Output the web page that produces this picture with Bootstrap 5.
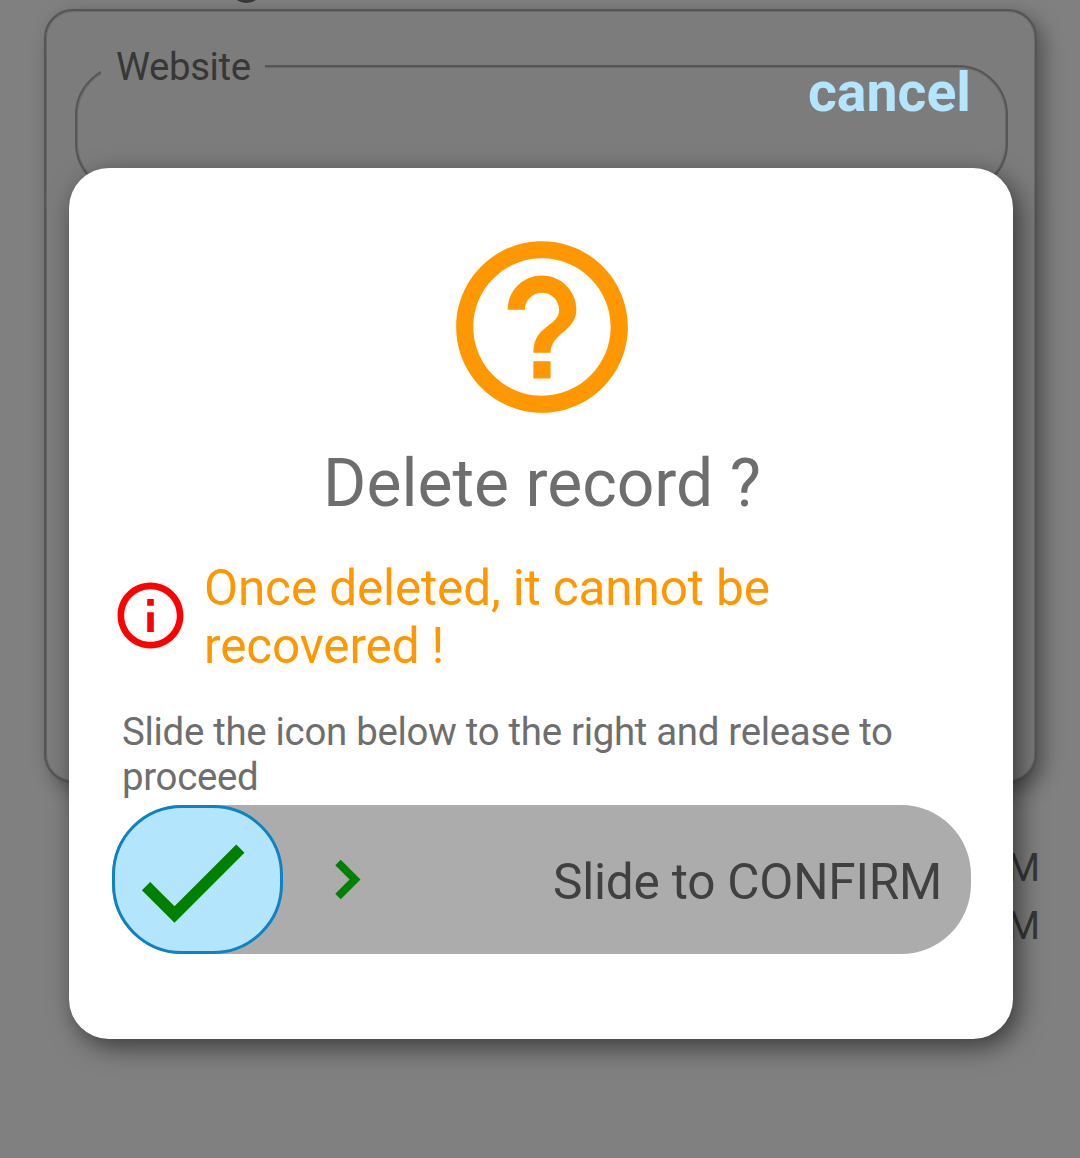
<!DOCTYPE html>
<html lang="en">
<head>
<meta charset="utf-8">
<meta name="viewport" content="width=device-width, initial-scale=1">
<title>Delete record</title>
<link href="https://cdn.jsdelivr.net/npm/bootstrap@5.3.0/dist/css/bootstrap.min.css" rel="stylesheet">
<style>
body{font-family:Roboto,"Noto Sans",sans-serif;background:#808080;color:#373737}
.screen{height:1158px;background:#808080}
.page-heading{height:9px;padding-left:232px;font-size:54px;line-height:54px}
.page-heading span{margin-top:-53px}
.record-card{height:774px;margin:0 43px 0 44px;padding:54px 27px 0 29px;border:2px solid #555;border-radius:29px;background:#7c7c7c;box-shadow:7px 7px 20px rgba(0,0,0,.36),inset 0 0 0 1px #696969}
.site-field{height:128px;border:2px solid #555;border-radius:50px;padding-left:24px;box-shadow:inset 0 0 0 1px #696969}
.site-label{height:40px;margin-top:-20px;padding:0 15px 0 15px;background:#7c7c7c;font-size:38.4px;line-height:40px;letter-spacing:-.4px;width:164px;white-space:nowrap}
.times{padding:56px 40px 0 0;font-size:38.4px;line-height:58px}
.overlay{padding:63px 67px 0 69px}
.cancel{height:105px;padding-right:42px;color:#b3e5fc;font-size:55.4px;line-height:60px;font-weight:700}
.dialog-panel{height:871px;border-radius:40px;box-shadow:6px 8px 26px rgba(0,0,0,.55);padding:56px 42px 0 43px}
.title-text{height:78px;margin-top:15px;padding-left:1px;font-size:66px;line-height:78px;color:#6e6e6e;white-space:nowrap}
.warn{margin-top:34.5px;height:116px;color:#ff9800;font-size:49.5px;letter-spacing:-.14px;line-height:58px;white-space:nowrap}
.warn svg{margin:0 14px 0 -1px}
.warn-text{padding-top:3px}
.hint{margin:35.5px 0 0 10px;height:90px;font-size:38.4px;letter-spacing:-.3px;line-height:45px;color:#6e6e6e;white-space:nowrap}
.slider{margin-top:5.5px;height:149px;border-radius:70px;background:#acacac;color:#404040;font-size:49.5px;letter-spacing:-.2px;padding-right:29px;white-space:nowrap}
.thumb{width:171px;height:149px;border:3px solid #0f82c4;border-radius:70px;background:#b3e5fc}
.check{margin-left:6.5px;margin-top:6px}
.arrow{margin-left:24px;margin-top:1px}
.slide-label{padding-top:6px}
</style>
<script src="https://cdn.jsdelivr.net/npm/bootstrap@5.3.0/dist/js/bootstrap.bundle.min.js"></script>
</head>
<body>
<div class="screen position-relative overflow-hidden">
  <div class="page-heading d-flex fw-bold"><span>g</span></div>
  <div class="record-card">
    <div class="site-field d-flex align-items-start"><div class="site-label">Website</div></div>
  </div>
  <div class="times text-end"><div>M</div><div>M</div></div>

  <div class="overlay position-absolute top-0 start-0 w-100">
    <div class="cancel text-end">cancel</div>
    <div class="dialog-panel bg-white" role="dialog">
      <div class="d-flex justify-content-center">
        <svg width="206" height="206" viewBox="0 0 24 24" fill="#ff9800"><path d="M11 18h2v-2h-2v2zm1-16C6.48 2 2 6.48 2 12s4.480 10 10 10 10-4.480 10-10S17.520 2 12 2zm0 18c-4.410 0-8-3.590-8-8s3.590-8 8-8 8 3.590 8 8-3.590 8-8 8zm0-14c-2.210 0-4 1.790-4 4h2c0-1.100.9-2 2-2s2 .9 2 2c0 2-3 1.750-3 5h2c0-2.250 3-2.500 3-5 0-2.210-1.790-4-4-4z"/></svg>
      </div>
      <div class="title-text text-center">Delete record ?</div>
      <div class="warn d-flex align-items-center">
        <svg class="flex-shrink-0" width="79" height="79" viewBox="0 0 24 24" fill="#f00"><path d="M11 7h2v2h-2zm0 4h2v6h-2zm1-9C6.480 2 2 6.480 2 12s4.480 10 10 10 10-4.480 10-10S17.520 2 12 2zm0 18c-4.410 0-8-3.590-8-8s3.590-8 8-8 8 3.590 8 8-3.590 8-8 8z"/></svg>
        <div class="warn-text">Once deleted, it cannot be<br>recovered !</div>
      </div>
      <div class="hint">Slide the icon below to the right and release to<br>proceed</div>
      <div class="slider d-flex align-items-center">
        <div class="thumb d-flex align-items-center">
          <svg class="check" width="140" height="140" viewBox="0 0 24 24" fill="green"><path d="M9 16.170L4.830 12l-1.420 1.410L9 19 21 7l-1.410-1.410z"/></svg>
        </div>
        <svg class="arrow" width="79" height="79" viewBox="0 0 24 24" fill="green"><path d="M10.250 6L8.590 7.660 12.930 12l-4.340 4.340L10.250 18l6-6z"/></svg>
        <div class="slide-label ms-auto">Slide to CONFIRM</div>
      </div>
    </div>
  </div>
</div>
</body>
</html>
